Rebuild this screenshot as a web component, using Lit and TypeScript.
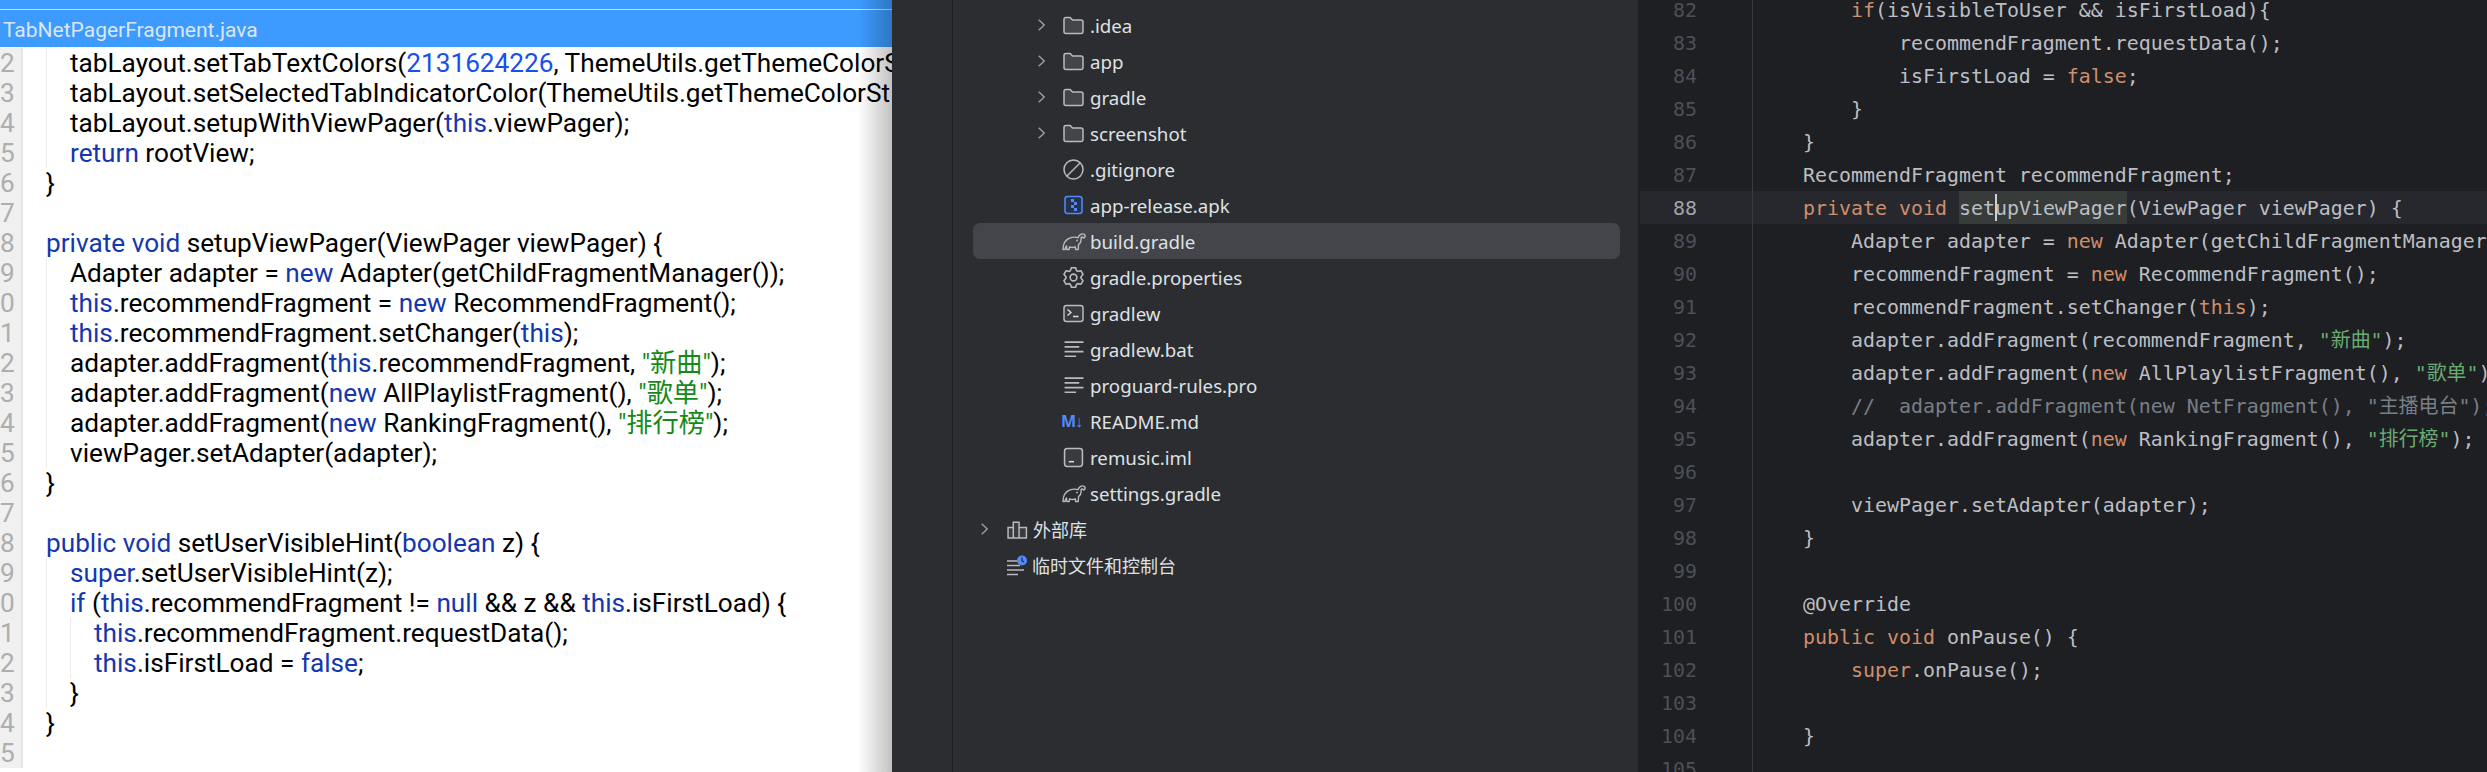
import { LitElement, html, css, svg } from "lit";
import { customElement } from "lit/decorators.js";

// Token syntax: {k|keyword} {n|number} {s|string} {c|comment} {w|word highlight with caret}
type Seg = { c: string; t: string };
function parse(src: string): Seg[] {
  const out: Seg[] = [];
  const re = /\{([knscw])\|([^}]*)\}/g;
  let last = 0;
  let m: RegExpExecArray | null;
  while ((m = re.exec(src))) {
    if (m.index > last) out.push({ c: "", t: src.slice(last, m.index) });
    out.push({ c: m[1], t: m[2] });
    last = m.index + m[0].length;
  }
  if (last < src.length) out.push({ c: "", t: src.slice(last) });
  return out;
}

const LEFT: [string, number, string][] = [
  ["2", 1, "tabLayout.setTabTextColors({n|2131624226}, ThemeUtils.getThemeColorS"],
  ["3", 1, "tabLayout.setSelectedTabIndicatorColor(ThemeUtils.getThemeColorSt"],
  ["4", 1, "tabLayout.setupWithViewPager({k|this}.viewPager);"],
  ["5", 1, "{k|return} rootView;"],
  ["6", 0, "\u200b}"],
  ["7", 0, ""],
  ["8", 0, "{k|private void} setupViewPager(ViewPager viewPager) {"],
  ["9", 1, "Adapter adapter = {k|new} Adapter(getChildFragmentManager());"],
  ["0", 1, "{k|this}.recommendFragment = {k|new} RecommendFragment();"],
  ["1", 1, "{k|this}.recommendFragment.setChanger({k|this});"],
  ["2", 1, "adapter.addFragment({k|this}.recommendFragment, {s|\"新曲\"});"],
  ["3", 1, "adapter.addFragment({k|new} AllPlaylistFragment(), {s|\"歌单\"});"],
  ["4", 1, "adapter.addFragment({k|new} RankingFragment(), {s|\"排行榜\"});"],
  ["5", 1, "viewPager.setAdapter(adapter);"],
  ["6", 0, "\u200b}"],
  ["7", 0, ""],
  ["8", 0, "{k|public void} setUserVisibleHint({k|boolean} z) {"],
  ["9", 1, "{k|super}.setUserVisibleHint(z);"],
  ["0", 1, "{k|if} ({k|this}.recommendFragment != {k|null} && z && {k|this}.isFirstLoad) {"],
  ["1", 2, "{k|this}.recommendFragment.requestData();"],
  ["2", 2, "{k|this}.isFirstLoad = {k|false};"],
  ["3", 1, "\u200b}"],
  ["4", 0, "\u200b}"],
  ["5", 0, ""],
];

const RIGHT: string[] = [
  "        {k|if}(isVisibleToUser && isFirstLoad){",
  "            recommendFragment.requestData();",
  "            isFirstLoad = {k|false};",
  "        }",
  "    }",
  "    RecommendFragment recommendFragment;",
  "    {k|private void} {w|setupViewPager}(ViewPager viewPager) {",
  "        Adapter adapter = {k|new} Adapter(getChildFragmentManager());",
  "        recommendFragment = {k|new} RecommendFragment();",
  "        recommendFragment.setChanger({k|this});",
  "        adapter.addFragment(recommendFragment, {s|\"新曲\"});",
  "        adapter.addFragment({k|new} AllPlaylistFragment(), {s|\"歌单\"});",
  "        {c|//  adapter.addFragment(new NetFragment(), \"主播电台\");}",
  "        adapter.addFragment({k|new} RankingFragment(), {s|\"排行榜\"});",
  "",
  "        viewPager.setAdapter(adapter);",
  "    }",
  "",
  "    @Override",
  "    {k|public void} onPause() {",
  "        {k|super}.onPause();",
  "",
  "    }",
  "",
];

const gearPath = (() => {
  const pts: string[] = [];
  for (let i = 0; i < 6; i++) {
    const a = (i * Math.PI) / 3 - Math.PI / 2;
    const p = (r: number, d: number) =>
      `${(10 + r * Math.cos(a + d)).toFixed(2)} ${(10 + r * Math.sin(a + d)).toFixed(2)}`;
    pts.push(p(7.1, -0.44), p(9.6, -0.2), p(9.6, 0.2), p(7.1, 0.44));
  }
  return "M" + pts.join("L") + "Z";
})();

const ELEPHANT = svg`<path d="M1 17C1 11 3 7.5 7.5 5.6C10.500 4.400 13.500 4.300 16 5.200C17 2.200 20 .6 22.200 1.800C23.800 2.800 23.300 5.200 21.500 5.600C21.100 4.200 19.500 4.100 19 5.300C19.500 8.200 18.300 10.800 16.600 12L16.200 17H13.700L13.200 14.300C11.300 15.200 9.300 15.200 7.600 14.300L7.100 17H4.800L4.500 13.500C3.500 14.300 3.200 15.500 3.100 17Z" fill="none" stroke="#b9bbbe" stroke-width="1.400" stroke-linejoin="round"/><circle cx="15" cy="8" r=".9" fill="#b9bbbe"/>`;

const ICONS: Record<string, unknown> = {
  folder: html`<svg class="ic" viewBox="0 0 21 18"><path d="M1 3a2 2 0 0 1 2-2h4.200l2.300 2.500H18a2 2 0 0 1 2 2V15a2 2 0 0 1-2 2H3a2 2 0 0 1-2-2Z" fill="#43454a" stroke="#b9bbbe" stroke-width="1.500"/></svg>`,
  ignore: html`<svg class="ic" viewBox="0 0 21 21"><circle cx="10.500" cy="10.500" r="9.500" fill="none" stroke="#b9bbbe" stroke-width="1.500"/><path d="M4 17 17 4" stroke="#b9bbbe" stroke-width="1.500"/></svg>`,
  apk: html`<svg class="ic" viewBox="0 0 21 21"><rect x="2" y="1.500" width="17" height="17" rx="2.500" fill="#25324d" stroke="#548af7" stroke-width="1.500"/><path d="M8 4h3v3H8zM11 7h3v3h-3zM8 10h3v3H8zM11 13h3v3h-3z" fill="#548af7"/></svg>`,
  gradle: html`<svg class="ic wide" viewBox="0 0 24 18">${ELEPHANT}</svg>`,
  gear: html`<svg class="ic" viewBox="0 0 20 20"><path d="${gearPath}" fill="none" stroke="#b9bbbe" stroke-width="1.500" stroke-linejoin="round"/><circle cx="10" cy="10" r="3.200" fill="none" stroke="#b9bbbe" stroke-width="1.500"/></svg>`,
  term: html`<svg class="ic" viewBox="0 0 21 18"><rect x="1" y="1" width="19" height="16" rx="2.500" fill="#393b40" stroke="#b9bbbe" stroke-width="1.500"/><path d="M4.500 5 8 8 4.500 11M10 12h5.500" fill="none" stroke="#dfe1e5" stroke-width="1.300"/></svg>`,
  lines: html`<svg class="ic" viewBox="0 0 20 17"><path d="M1.500 1.500h18M1.500 6h14M1.500 10.500h18M1.500 15h11" stroke="#b9bbbe" stroke-width="1.500"/></svg>`,
  md: html`<span class="md">M↓</span>`,
  iml: html`<svg class="ic" viewBox="0 0 20 19"><rect x="1.500" y="1" width="17" height="17" rx="2.500" fill="#393b40" stroke="#b9bbbe" stroke-width="1.500"/><path d="M5.500 13.500h5" stroke="#dfe1e5" stroke-width="1.400"/></svg>`,
  lib: html`<svg class="ic" viewBox="0 0 20 18"><path d="M1 7h5v10H1zM6 2h5.500v15H6zM11.500 7h7v10h-7z" fill="#393b40" stroke="#b9bbbe" stroke-width="1.400"/></svg>`,
  scratch: html`<svg class="ic" viewBox="0 0 21 20"><path d="M1 5.500h11M1 10h13M1 14.500h17M1 19h11" stroke="#b9bbbe" stroke-width="1.400"/><circle cx="16" cy="5" r="5" fill="#548af7"/><path d="M16 2v3.200l2 1.300" fill="none" stroke="#1e1f22" stroke-width="1.100"/></svg>`,
};

type TreeRow = { name: string; icon: string; chev?: boolean; root?: boolean; sel?: boolean };
const TREE: TreeRow[] = [
  { name: ".idea", icon: "folder", chev: true },
  { name: "app", icon: "folder", chev: true },
  { name: "gradle", icon: "folder", chev: true },
  { name: "screenshot", icon: "folder", chev: true },
  { name: ".gitignore", icon: "ignore" },
  { name: "app-release.apk", icon: "apk" },
  { name: "build.gradle", icon: "gradle", sel: true },
  { name: "gradle.properties", icon: "gear" },
  { name: "gradlew", icon: "term" },
  { name: "gradlew.bat", icon: "lines" },
  { name: "proguard-rules.pro", icon: "lines" },
  { name: "README.md", icon: "md" },
  { name: "remusic.iml", icon: "iml" },
  { name: "settings.gradle", icon: "gradle" },
  { name: "外部库", icon: "lib", chev: true, root: true },
  { name: "临时文件和控制台", icon: "scratch", root: true },
];

@customElement("app-root")
export class AppRoot extends LitElement {
  static styles = css`
    :host { display: block; width: 2487px; height: 772px; overflow: hidden; background: #1e1f22; }
    .page { display: flex; width: 2487px; height: 772px; overflow: hidden; }

    /* left: decompiled source window */
    .src { position: relative; flex: none; width: 892px; height: 772px; background: #fff; overflow: hidden; display: flex; flex-direction: column; font-family: Roboto, sans-serif; }
    .src::after { content: ""; position: absolute; top: 0; bottom: 0; right: 0; width: 34px; background: linear-gradient(to right, rgba(0,0,0,0), rgba(0,0,0,.24)); }
    .tabbar { flex: none; height: 47px; box-sizing: border-box; background: #3d9bff; padding: 9px 0 0; }
    .tabline { height: 1px; background: #c9e0f8; }
    .tabname { padding-left: 3px; color: #dbe6f2; font-size: 21px; line-height: 41px; white-space: pre; }
    .srcbody { flex: 1; min-height: 0; overflow: hidden; padding-top: 1px; }
    .srow { display: flex; height: 30px; line-height: 30px; font-size: 26.2px; color: #000; white-space: pre; }
    .sgut { flex: none; width: 21px; border-right: 2px solid #e4e4e4; background: #f0f0f0; color: #aeaeae; text-align: right; overflow: hidden; box-sizing: content-box; }
    .sgut span { display: block; margin-right: 10px; }
    .sbody { display: flex; padding-left: 23px; }
    .ind { flex: none; width: 23px; border-left: 1px solid #ececec; }
    .src .k { color: #1537ad; }
    .src .n { color: #1750eb; }
    .src .s { color: #158a1b; font-family: Roboto, "Noto Sans CJK SC", sans-serif; }

    /* middle: project tree */
    .tree { flex: none; width: 746px; height: 772px; display: flex; background: #2b2d30; overflow: hidden; }
    .stripe { flex: none; width: 61px; border-right: 1px solid #1e1f22; box-sizing: border-box; }
    .list { flex: 1; min-width: 0; padding: 7px 18px 0 20px; }
    .trow { display: flex; align-items: center; height: 36px; border-radius: 7px; color: #dfe1e5; font-family: "Noto Sans", "Noto Sans CJK SC", sans-serif; font-size: 18.7px; white-space: pre; }
    .trow.sel { background: #43454a; }
    .trow .name { padding-top: 2px; line-height: 30px; }
    .trow.root .name { font-size: 18px; }
    .chev { flex: none; width: 7px; height: 12px; margin-right: 18px; }
    .d1 { padding-left: 65px; }
    .d1 .slot { width: 27px; }
    .d0 { padding-left: 8px; }
    .d0 .chev { margin-right: 19px; }
    .d0 .slot { width: 26px; }
    .blank { flex: none; width: 25px; }
    .slot { flex: none; display: flex; align-items: center; }
    .ic { display: block; width: 21px; height: 21px; }
    .ic.wide { width: 24px; margin-left: -1px; }
    .md { color: #548af7; font-family: "Noto Sans", sans-serif; font-weight: 700; font-size: 16px; margin-left: -2px; letter-spacing: -1px; }

    /* right: editor */
    .edit { flex: 1; min-width: 0; height: 772px; overflow: hidden; background: #1e1f22; font-family: "DejaVu Sans Mono", "Noto Sans CJK SC", monospace; font-size: 19.93px; color: #bcbec4; }
    .elist { margin-top: -7px; }
    .erow { display: flex; height: 33px; line-height: 35px; margin-left: 2px; white-space: pre; }
    .erow.cur { background: #26282e; }
    .enum { flex: none; width: 57px; text-align: right; color: #4b5059; padding-right: 55px; border-right: 1px solid #393b40; }
    .cur .enum { color: #a1a3ab; }
    .ecode { padding-left: 2px; }
    .edit .k { color: #cf8e6d; }
    .edit .s { color: #6aab73; }
    .edit .c { color: #7a7e85; }
    .edit .w { display: inline-block; height: 33px; background: #373b39; position: relative; }
    .caret { position: absolute; left: 36px; top: 3px; width: 2px; height: 27px; background: #ced0d6; }
  `;

  private segs(src: string) {
    return parse(src).map((s) =>
      s.c === "w"
        ? html`<span class="w">${s.t}<i class="caret"></i></span>`
        : s.c
        ? html`<span class=${s.c}>${s.t}</span>`
        : s.t
    );
  }

  render() {
    return html`<div class="page">
      <section class="src">
        <div class="tabbar">
          <div class="tabline"></div>
          <div class="tabname">TabNetPagerFragment.java</div>
        </div>
        <div class="srcbody">
          ${LEFT.map(
            ([n, depth, text]) => html`<div class="srow">
              <div class="sgut"><span>${n}</span></div>
              <div class="sbody">
                ${Array.from({ length: depth }, () => html`<div class="ind"></div>`)}
                <div>${this.segs(text)}</div>
              </div>
            </div>`
          )}
        </div>
      </section>

      <section class="tree">
        <div class="stripe"></div>
        <div class="list">
          ${TREE.map(
            (r) => html`<div class="trow ${r.root ? "root d0" : "d1"} ${r.sel ? "sel" : ""}">
              ${r.chev
                ? html`<svg class="chev" viewBox="0 0 7 12"><path d="M.7.7 6.200 6 .7 11.300" fill="none" stroke="#9da0a8" stroke-width="1.300"/></svg>`
                : html`<div class="blank"></div>`}
              <div class="slot">${ICONS[r.icon]}</div>
              <div class="name">${r.name}</div>
            </div>`
          )}
        </div>
      </section>

      <section class="edit">
        <div class="elist">
          ${RIGHT.map(
            (t, i) => html`<div class="erow ${i === 6 ? "cur" : ""}">
              <div class="enum">${82 + i}</div>
              <div class="ecode">${this.segs(t)}</div>
            </div>`
          )}
        </div>
      </section>
    </div>`;
  }
}
